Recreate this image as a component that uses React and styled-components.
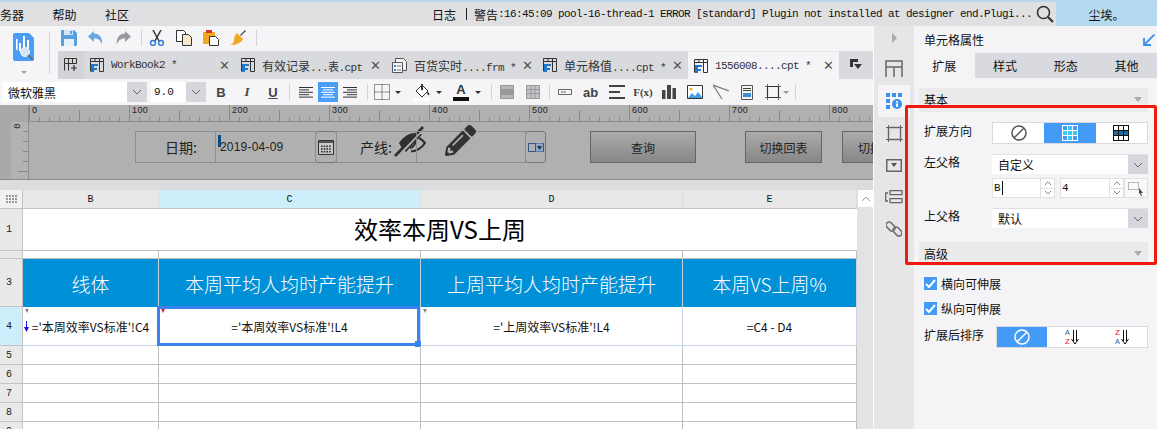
import styled, { createGlobalStyle } from "styled-components";
import { FaPencilAlt } from "react-icons/fa";

const GlobalStyle = createGlobalStyle`
  html, body {
    margin: 0;
    padding: 0;
    background: #f5f5f8;
  }
  * {
    box-sizing: border-box;
  }
`;

const CJK = `"Noto Sans CJK SC", "Liberation Sans", sans-serif`;
const MONO = `"Liberation Mono", "Noto Sans CJK SC", monospace`;

const Page = styled.div`
  width: 1157px;
  height: 429px;
  overflow: hidden;
  font-family: ${CJK};
  font-size: 12px;
  color: #111;
  background: #f5f5f8;
`;

/* top menu */
const MenuBar = styled.div`
  height: 26px;
  border-top: 2px solid #b5d6ee;
  background: #e0e0e3;
  display: flex;
  align-items: center;
`;

const MenuItem = styled.span`
  width: 24px;
  flex: none;
  margin-right: 28.5px;
  white-space: nowrap;
`;

const LogArea = styled.div`
  margin-left: 274.5px;
  width: 600px;
  flex: none;
  display: flex;
  align-items: center;
  white-space: nowrap;
`;

const LogDivider = styled.span`
  width: 1px;
  height: 12px;
  background: #222;
  margin: 0 7px 0 10px;
`;

const LogText = styled.span`
  font-family: ${MONO};
  font-size: 11px;
  letter-spacing: -0.6px;
`;

const SearchSlot = styled.div`
  width: 18px;
  height: 18px;
  flex: none;
  margin-left: 4px;
  display: flex;
`;

const UserBlock = styled.div`
  margin-left: auto;
  width: 101px;
  flex: none;
  height: 24px;
  background: #b5daf0;
  display: flex;
  align-items: center;
  justify-content: center;
`;

const Main = styled.div`
  display: flex;
  height: 403px;
`;

const LeftColumn = styled.div`
  width: 873px;
  flex: none;
  display: flex;
  flex-direction: column;
  overflow: hidden;
`;

/* toolbars */
const TopTools = styled.div`
  height: 53px;
  display: flex;
`;

const LogoColumn = styled.div`
  width: 58px;
  flex: none;
  padding: 7px 0 0 13px;
  position: relative;
`;

const LogoDivider = styled.div`
  position: absolute;
  left: 49px;
  top: 6px;
  width: 1px;
  height: 42px;
  background: #d4d4d8;
`;

const LogoArrow = styled.div`
  width: 0;
  height: 0;
  margin: 7px 0 0 8px;
  border-left: 3px solid transparent;
  border-right: 3px solid transparent;
  border-top: 3px solid #a0a0a4;
`;

const TopStack = styled.div`
  flex: 1;
  min-width: 0;
`;

const QuickRow = styled.div`
  height: 25px;
  padding: 4px 0 0 3px;
  display: flex;
  align-items: flex-start;
  gap: 11px;
`;

const QuickSep = styled.div`
  width: 1px;
  height: 16px;
  background: #d4d4d8;
  margin: 0 -4px 0 -1px;
`;

const TabStrip = styled.div`
  height: 28px;
  background: #d8dade;
  display: flex;
`;

const AddTab = styled.div`
  width: 26px;
  background: #d2d4d8;
  display: flex;
  align-items: center;
  justify-content: center;
`;

const Tab = styled.div`
  width: 151px;
  flex: none;
  display: flex;
  align-items: center;
  padding-left: 6px;
  background: ${(p) => (p.$active ? "#f5f5f8" : "transparent")};
  border-top: ${(p) => (p.$active ? "1px solid #e8e8ea" : "none")};
`;

const TabLabel = styled.span`
  margin-left: 7px;
  width: 107px;
  font-family: ${MONO};
  font-size: 11px;
  letter-spacing: -0.6px;
  color: #333;
  white-space: nowrap;
  overflow: hidden;
`;

const TabCjk = styled.span`
  font-family: ${CJK};
  font-size: 12px;
  letter-spacing: 0;
`;

const TabClose = styled.span`
  margin-left: 1px;
  font-size: 13px;
  color: #555;
  font-family: "Liberation Sans", sans-serif;
`;

const TabMenu = styled.div`
  width: 34px;
  display: flex;
  align-items: center;
  justify-content: center;
`;

const FormatRow = styled.div`
  height: 26px;
  display: flex;
  align-items: center;
  padding-left: 2px;
`;

const Combo = styled.div`
  width: ${(p) => p.$w}px;
  height: 20px;
  margin-left: ${(p) => p.$ml || 0}px;
  display: flex;
  background: #fff;
  align-items: center;
`;

const ComboText = styled.span`
  flex: 1;
  padding-left: ${(p) => p.$pad || 6}px;
  font-size: ${(p) => p.$size || 12}px;
  font-family: ${(p) => (p.$mono ? MONO : CJK)};
  white-space: nowrap;
`;

const ComboArrow = styled.div`
  width: 20px;
  height: 100%;
  background: #d5d7dc;
  display: flex;
  align-items: center;
  justify-content: center;
`;

const Slot = styled.div`
  width: ${(p) => p.$w}px;
  height: 20px;
  margin-left: ${(p) => p.$ml || 0}px;
  flex: none;
  display: flex;
  align-items: center;
  justify-content: center;
  background: ${(p) => (p.$on ? "#4a9cf5" : "transparent")};
  font-family: ${(p) => (p.$serif ? '"Liberation Serif", serif' : '"Liberation Sans", sans-serif')};
  font-weight: ${(p) => (p.$bold ? 700 : 400)};
  font-style: ${(p) => (p.$italic ? "italic" : "normal")};
  text-decoration: ${(p) => (p.$under ? "underline" : "none")};
  font-size: ${(p) => p.$size || 13}px;
  color: #444;
  white-space: nowrap;
`;

const VSep = styled.div`
  width: 1px;
  height: 16px;
  flex: none;
  margin-left: ${(p) => p.$ml}px;
  background: #d4d4d8;
`;

const Caret = styled.div`
  width: 0;
  height: 0;
  flex: none;
  margin-left: ${(p) => p.$ml}px;
  border-left: 3px solid transparent;
  border-right: 3px solid transparent;
  border-top: 3px solid ${(p) => p.$color || "#333"};
`;

const ColorA = styled.div`
  width: 16px;
  margin-left: ${(p) => p.$ml}px;
  flex: none;
  display: flex;
  flex-direction: column;
  align-items: center;
  font-family: "Liberation Sans", sans-serif;
  font-weight: 700;
  font-size: 13px;
  line-height: 13px;
  color: #333;
  &::after {
    content: "";
    width: 16px;
    height: 4px;
    background: #111;
    margin-top: 1px;
  }
`;

/* report form designer */
const Designer = styled.div`
  height: 75px;
  background: #b0b0b0;
  display: flex;
  border-bottom: 1px solid #8c8c8c;
`;

const SideRuler = styled.div`
  width: 29px;
  flex: none;
  padding: 17px 0 0 11px;
  background: #a9a9a9;
  border-right: 1px solid #8e8e8e;
`;

const SideRulerInner = styled.div`
  position: relative;
  height: 57px;
  background: #b2b2b2;
`;

const SideZero = styled.span`
  position: absolute;
  left: 4px;
  top: -1px;
  font-size: 9px;
  font-family: ${MONO};
  transform: rotate(-90deg);
  color: #222;
`;

const SideTick = styled.div`
  height: 10px;
  width: ${(p) => p.$w}px;
  margin-left: auto;
  border-bottom: 1px solid #8a8a8a;
`;

const DesignerBody = styled.div`
  flex: 1;
  min-width: 0;
  overflow: hidden;
`;

const Ruler = styled.div`
  height: 17px;
  display: flex;
  border-bottom: 1px solid #8e8e8e;
`;

const RulerMark = styled.div`
  width: 100px;
  flex: none;
  padding-left: 2px;
  font-size: 9px;
  line-height: 11px;
  font-family: "Liberation Sans", sans-serif;
  letter-spacing: 0.4px;
  color: #222;
  border-left: 1px solid #8a8a8a;
  background-image: repeating-linear-gradient(to right, transparent 0, transparent 9px, #8a8a8a 9px, #8a8a8a 10px),
    linear-gradient(to right, transparent 49px, #8a8a8a 49px, #8a8a8a 50px, transparent 50px);
  background-size: 100% 4px, 100% 11px;
  background-position: 0 100%, 0 100%;
  background-repeat: no-repeat;
`;

const WidgetRow = styled.div`
  display: flex;
  align-items: stretch;
  height: 32px;
  margin-top: 9px;
  padding-left: 107px;
`;

const LabelBox = styled.div`
  position: relative;
  width: ${(p) => p.$w}px;
  flex: none;
  border: 1px solid #8e8e8e;
  margin-left: -1px;
  display: flex;
  align-items: center;
  padding-left: ${(p) => p.$pad}px;
  font-size: ${(p) => p.$size || 14}px;
  color: #222;
  white-space: nowrap;
`;

const ValueText = styled.span`
  font-family: "Liberation Sans", sans-serif;
  font-size: 12px;
  letter-spacing: 0.2px;
  color: #222;
`;

const CursorMark = styled.div`
  position: absolute;
  left: 2px;
  top: 3px;
  width: 3px;
  height: 12px;
  background: #0d4c80;
`;

const Overlay = styled.div`
  position: absolute;
  left: ${(p) => p.$x}px;
  top: ${(p) => p.$y}px;
  display: flex;
  color: #333;
`;

const PickButton = styled.div`
  width: ${(p) => p.$w}px;
  flex: none;
  margin-left: -1px;
  border: 1px solid #777;
  border-radius: 3px;
  display: flex;
  align-items: center;
  justify-content: center;
`;

const GreyButton = styled.div`
  width: ${(p) => p.$w}px;
  flex: none;
  margin-left: ${(p) => p.$ml}px;
  border: 1px solid #666;
  background: linear-gradient(#ababab, #878787);
  display: flex;
  align-items: center;
  justify-content: ${(p) => (p.$clip ? "flex-start" : "center")};
  padding-left: ${(p) => (p.$clip ? 15 : 0)}px;
  white-space: nowrap;
  color: #222;
  font-size: 12px;
`;

const Strip = styled.div`
  height: 10px;
  background: #dcdcdf;
`;

/* spreadsheet */
const SheetArea = styled.div`
  flex: 1;
  display: flex;
  background: #fff;
  min-height: 0;
`;

const Sheet = styled.div`
  width: 857px;
  display: grid;
  grid-template-columns: 23px 136px 262px 262px 174px;
  grid-template-rows: 19px 42px 8px 48px 39px 19px 19px 19px 19px 19px;
  background: #fff;
`;

const Corner = styled.div`
  background: #f1f1f4;
  border-right: 1px solid #c4c4c4;
  border-bottom: 1px solid #c4c4c4;
  display: flex;
  align-items: center;
  justify-content: center;
`;

const ColHead = styled.div`
  background: ${(p) => (p.$on ? "#cdeefb" : "#e8e8e8")};
  border-bottom: 1px solid #c4c4c4;
  border-right: 1px solid #dcdcdc;
  display: flex;
  align-items: center;
  justify-content: center;
  font-family: ${MONO};
  font-size: 10px;
`;

const RowHead = styled.div`
  background: ${(p) => (p.$on ? "#cdeefb" : "#e9e9e9")};
  border-right: 1px solid #c4c4c4;
  border-bottom: 1px solid #c4c4c4;
  display: flex;
  align-items: center;
  justify-content: center;
  padding-right: 4px;
  font-family: ${MONO};
  font-size: 10px;
  color: #222;
`;

const TitleCell = styled.div`
  grid-column: 2 / 6;
  border-bottom: 1px solid #c0c0c0;
  display: flex;
  align-items: center;
  justify-content: center;
  padding-bottom: 2px;
  font-size: 24px;
  color: #000;
`;

const Cell = styled.div`
  position: relative;
  border-right: 1px solid ${(p) => (p.$soft ? "#c8d6e6" : "#c0c0c0")};
  border-bottom: 1px solid ${(p) => (p.$soft ? "#c8d6e6" : "#c0c0c0")};
  display: flex;
  align-items: center;
  justify-content: center;
  white-space: nowrap;
  color: #111;
`;

const HeadCell = styled.div`
  background: #0090d7;
  border-right: 1px solid #c4d4dc;
  display: flex;
  align-items: center;
  justify-content: center;
  color: #fff;
  font-size: 19px;
  font-weight: 300;
  white-space: nowrap;
`;

const ExpandMark = styled.span`
  position: absolute;
  left: 2px;
  top: 2px;
  width: 0;
  height: 0;
  border-left: 2px solid transparent;
  border-right: 2px solid transparent;
  border-top: 4px solid ${(p) => p.$color || "#888"};
`;

const BlueArrow = styled.span`
  position: absolute;
  left: 1px;
  top: 14px;
  display: flex;
`;

const Selection = styled.div`
  position: absolute;
  inset: -1px 0 -1px -2px;
  border: 3px solid #3a82ee;
  pointer-events: none;
  &::after {
    content: "";
    position: absolute;
    right: -4px;
    bottom: -4px;
    width: 6px;
    height: 6px;
    background: #3a82ee;
  }
`;

const ScrollBar = styled.div`
  width: 16px;
  background: #e3e3e3;
`;

const ScrollUp = styled.div`
  height: 17px;
  margin-left: 1px;
  background: #fff;
  display: flex;
  align-items: center;
  justify-content: center;
`;

/* right side */
const Rail = styled.div`
  width: 41px;
  flex: none;
  background: #e6e6e6;
  border-left: 1px solid #fbfbfb;
  display: flex;
  flex-direction: column;
  align-items: center;
  padding-top: 7px;
`;

const RailArrow = styled.div`
  width: 0;
  height: 0;
  margin-bottom: 10px;
  border-top: 5px solid transparent;
  border-bottom: 5px solid transparent;
  border-left: 5px solid #aaa;
`;

const RailItem = styled.div`
  width: 32px;
  height: 32px;
  display: flex;
  align-items: center;
  justify-content: center;
  background: ${(p) => (p.$on ? "#f5f5f8" : "transparent")};
`;

const Panel = styled.div`
  flex: 1;
  position: relative;
  background: #f4f4f7;
`;

const PanelTitle = styled.div`
  height: 27px;
  padding: 0 2px 0 10px;
  display: flex;
  align-items: center;
  justify-content: space-between;
`;

const PanelTabs = styled.div`
  height: 25px;
  display: flex;
`;

const PanelTab = styled.div`
  flex: 1;
  display: flex;
  align-items: center;
  justify-content: center;
  background: ${(p) => (p.$on ? "#f4f4f7" : "#d8dadf")};
`;

const SectionHead = styled.div`
  height: 24px;
  margin: ${(p) => p.$mt}px 9px 0 5px;
  padding: 3px 6px 0 5px;
  background: #ebebeb;
  display: flex;
  justify-content: space-between;
  align-items: flex-start;
  line-height: 18px;
  font-size: 12px;
`;

const SectionCaret = styled.div`
  width: 0;
  height: 0;
  margin-top: 6px;
  border-left: 4px solid transparent;
  border-right: 4px solid transparent;
  border-top: 5px solid #aaa;
`;

const Field = styled.div`
  display: flex;
  align-items: center;
  margin: ${(p) => p.$mt}px 9px 0 10px;
  height: ${(p) => p.$h}px;
`;

const FieldLabel = styled.div`
  width: ${(p) => p.$w || 68}px;
  flex: none;
  padding-bottom: 6px;
  white-space: nowrap;
`;

const Segments = styled.div`
  flex: 1;
  height: 100%;
  display: flex;
  background: #fff;
  border: 1px solid #d8dadf;
`;

const Segment = styled.div`
  flex: 1;
  display: flex;
  align-items: center;
  justify-content: center;
  background: ${(p) => (p.$on ? "#439bf7" : "#fff")};
`;

const PanelSelect = styled.div`
  flex: 1;
  height: 100%;
  display: flex;
  align-items: center;
  background: #fff;
  border-top: 1px solid #e2e2e6;
`;

const SpinField = styled.div`
  display: flex;
  width: ${(p) => p.$w}px;
  height: 100%;
  margin-left: ${(p) => p.$ml || 0}px;
  background: #fff;
  border: 1px solid #e0e0e4;
  align-items: center;
  flex: none;
`;

const SpinText = styled.span`
  flex: 1;
  padding-left: 1px;
  font-family: ${MONO};
  font-size: 11px;
  display: flex;
  align-items: center;
`;

const TextCaret = styled.i`
  width: 1px;
  height: 14px;
  background: #111;
  margin-left: 1px;
`;

const SpinButtons = styled.div`
  width: 14px;
  height: 100%;
  display: flex;
  flex-direction: column;
  border-left: 1px solid #e0e0e4;
`;

const SpinButton = styled.div`
  flex: 1;
  display: flex;
  align-items: center;
  justify-content: center;
  &:first-child {
    border-bottom: 1px solid #e0e0e4;
  }
`;

const RegionPick = styled.div`
  width: 24px;
  height: 100%;
  flex: none;
  display: flex;
  align-items: center;
  justify-content: center;
  background: #f9f9fa;
  border: 1px solid #e0e0e4;
`;

const CheckRow = styled.div`
  display: flex;
  align-items: center;
  gap: 4px;
  height: 13px;
  margin: ${(p) => p.$mt}px 0 0 10px;
  white-space: nowrap;
`;

const CheckBox = styled.div`
  width: 13px;
  height: 13px;
  background: #439bf7;
  display: flex;
  align-items: center;
  justify-content: center;
`;

const SortGlyph = styled.div`
  display: flex;
  align-items: center;
  gap: 1px;
`;

const SortLetters = styled.div`
  display: flex;
  flex-direction: column;
  font-family: ${MONO};
  font-size: 8px;
  line-height: 9px;
`;

const SortLetter = styled.span`
  display: block;
  height: 9px;
  color: ${(p) => p.$color};
`;

const RedFrame = styled.div`
  position: absolute;
  left: -9px;
  right: 0;
  top: 79px;
  height: 160px;
  border: 3px solid #f01a10;
  border-radius: 2px;
  pointer-events: none;
`;

/* small drawings */
const Chevron = ({ dir = "down", color = "#666", w = 10 }) => (
  <svg width={w} height={w * 0.6} viewBox="0 0 10 6" fill="none">
    <path d={dir === "down" ? "M1 1l4 4 4-4" : "M1 5l4-4 4 4"} stroke={color} strokeWidth="1" />
  </svg>
);

const SearchIcon = () => (
  <svg width="18" height="18" viewBox="0 0 18 18" fill="none" stroke="#333">
    <circle cx="7.5" cy="7.5" r="6" strokeWidth="1.6" />
    <path d="M12 12l5 5" strokeWidth="2.2" />
  </svg>
);

const LogoIcon = () => (
  <svg width="21" height="28" viewBox="0 0 21 28">
    <path d="M2 0h14l5 5v21a2 2 0 0 1-2 2H2a2 2 0 0 1-2-2V2a2 2 0 0 1 2-2z" fill="#4a9cf5" />
    <path d="M3 6h1.5v11H3zM6 10h2v8H6zM10 3h2v12h-2zM14 7h2v9h-2z" fill="#fff" />
    <circle cx="12" cy="19" r="4.5" fill="#d8e6f4" stroke="#f4f4f4" />
    <path d="M15 22l5 5" stroke="#666" strokeWidth="1.5" />
  </svg>
);

const SaveIcon = () => (
  <svg width="16" height="16" viewBox="0 0 16 16">
    <path d="M1 0h12l3 3v12a1 1 0 0 1-1 1H1a1 1 0 0 1-1-1V1a1 1 0 0 1 1-1z" fill="#5a9fe0" />
    <path d="M3 0h9v5H3z" fill="#d4e6f8" />
    <path d="M9 1h2v3H9z" fill="#5a9fe0" />
    <path d="M3 9h10v7H3z" fill="#e6f0fa" />
  </svg>
);

const UndoIcon = ({ color, flip }) => (
  <svg width="16" height="16" viewBox="0 0 16 16" style={flip ? { transform: "scaleX(-1)" } : undefined}>
    <path d="M6 1L0 6.5 6 12V8.5c4 0 6.5 1.5 8 6 1-6-2-10.5-8-11z" fill={color} />
  </svg>
);

const ScissorsIcon = () => (
  <svg width="16" height="16" viewBox="0 0 16 16" fill="none">
    <path d="M4 0l6 11M12 0L6 11" stroke="#333" strokeWidth="1.5" />
    <circle cx="4" cy="13" r="2.4" stroke="#2f7fd6" strokeWidth="1.5" />
    <circle cx="12" cy="13" r="2.4" stroke="#2f7fd6" strokeWidth="1.5" />
  </svg>
);

const CopyIcon = () => (
  <svg width="16" height="16" viewBox="0 0 16 16">
    <path d="M.5.5h7l2 2v9h-9z" fill="#fff" stroke="#333" />
    <path d="M6.5 4.5h6l3 3v8h-9z" fill="#f5e8c8" stroke="#333" />
  </svg>
);

const PasteIcon = () => (
  <svg width="16" height="16" viewBox="0 0 16 16">
    <path d="M0 2h12v12H0z" fill="#f0a820" />
    <path d="M3 0h6v3H3z" fill="#d83030" />
    <path d="M6.5 6.5h6l3 3v6h-9z" fill="#fff" stroke="#333" />
  </svg>
);

const BrushIcon = () => (
  <svg width="16" height="16" viewBox="0 0 16 16">
    <path d="M10 5l5-5 1 1-5 5z" fill="#555" />
    <path d="M7 3l6 6c-2 4-7 6-13 6 3-1 4-3 4-5 0-3 1-5 3-7z" fill="#f0a820" />
  </svg>
);

const AddGridIcon = () => (
  <svg width="14" height="14" viewBox="0 0 14 14" fill="none" stroke="#333">
    <path d="M.5.5h12v5H.5zM.5 5.5v7M4.5.5v12M8.5.5v5" />
    <path d="M7 10h6M10 7v6" strokeWidth="1.2" />
  </svg>
);

const TabGridIcon = () => (
  <svg width="14" height="14" viewBox="0 0 14 14" fill="none">
    <path d="M.5.5h13v3H.5zM.5 3.5v10M13.5 3.5v10h-4M9.5 .5v13M5 .5v3" stroke="#333" />
    <path d="M1 6h7v2H4v2h3v2H4v2H1z" fill="#1f78c8" />
  </svg>
);

const FormTabIcon = () => (
  <svg width="15" height="15" viewBox="0 0 15 15" fill="none">
    <path d="M3.5.5h8l3 3v9h-11z" fill="#f2f2f2" stroke="#555" />
    <path d="M.5 4.5h10v10H.5z" fill="#f5f5f8" stroke="#555" />
    <path d="M2 7h2v2H2zM2 11h2v2H2z" fill="#3a85d8" />
    <path d="M5 8h4M5 12h4" stroke="#777" />
  </svg>
);

const TabMenuIcon = () => (
  <svg width="12" height="12" viewBox="0 0 12 12">
    <path d="M0 0h8v3H3v5H0z" fill="#333" />
    <path d="M4 5h8L8 10z" fill="#333" />
  </svg>
);

const AlignIcon = ({ kind, color = "#333" }) => {
  const rows = [14, 10, 14, 10, 14];
  return (
    <svg width="14" height="11" viewBox="0 0 14 11">
      {rows.map((w, i) => {
        const x = kind === "left" ? 0 : kind === "right" ? 14 - w : (14 - w) / 2;
        return <rect key={i} x={x} y={i * 2.4} width={w} height="1" fill={color} />;
      })}
    </svg>
  );
};

const BorderIcon = () => (
  <svg width="16" height="16" viewBox="0 0 16 16" fill="none" stroke="#333" strokeDasharray="1 1">
    <path d="M.5.5h15v15H.5zM.5 8h15M8 .5v15" />
  </svg>
);

const FillIcon = () => (
  <svg width="18" height="18" viewBox="0 0 18 18">
    <path d="M8 2l6 6-6 6-6-6z" fill="#fff" stroke="#333" />
    <path d="M13 8c2 2 3 3 2 4s-2-1-2-4zM7 1h2v6H7z" fill="#333" />
    <path d="M0 15h16v3H0z" fill="#fff" />
  </svg>
);

const MergeIcon = ({ split }) => (
  <svg width="14" height="14" viewBox="0 0 14 14">
    <path d="M0 0h14v14H0z" fill="#999" />
    <path d={split ? "M1 1h3.5v3H1zM5.5 1h3v3h-3zM9.5 1H13v3H9.5zM1 5h3.5v3H1zM5.5 5h3v3h-3zM9.5 5H13v3H9.5zM1 9h3.5v4H1zM5.5 9h3v4h-3zM9.5 9H13v4H9.5z" : "M1 1h12v3H1zM1 10h12v3H1z"} fill={split ? "#c4c4c8" : "#b8b8bc"} />
  </svg>
);

const FieldIcon = () => (
  <svg width="14" height="6" viewBox="0 0 14 6" fill="none" stroke="#666">
    <path d="M.5.5h13v5H.5z" />
    <path d="M3 3h5" />
  </svg>
);

const LinesIcon = () => (
  <svg width="16" height="14" viewBox="0 0 16 14" fill="#444">
    <path d="M0 0h16v2H0zM0 6h11v2H0zM0 12h16v2H0z" />
  </svg>
);

const ChartIcon = () => (
  <svg width="14" height="14" viewBox="0 0 14 14" fill="#444">
    <path d="M0 5h3.5v9H0zM5 0h4v14H5zM10.5 3H14v11h-3.5z" />
  </svg>
);

const ImageIcon = () => (
  <svg width="16" height="14" viewBox="0 0 16 14">
    <path d="M.5.5h15v13H.5z" fill="#fff" stroke="#333" />
    <circle cx="4" cy="4" r="1.5" fill="#f0b020" />
    <path d="M1 13l4-5 3 3 3-4 4 5v1z" fill="#3fa0e8" />
  </svg>
);

const SlashIcon = () => (
  <svg width="16" height="16" viewBox="0 0 16 16" fill="none" stroke="#777" strokeWidth="1.2">
    <path d="M0 1l16 6M0 1l9 14" />
  </svg>
);

const DocIcon = () => (
  <svg width="12" height="15" viewBox="0 0 12 15">
    <path d="M.5.5h11v14H.5z" fill="#f4f4f4" stroke="#555" />
    <path d="M2 3h8v1H2zM2 5h8v1H2z" fill="#444" />
    <path d="M2 8h8v4H2z" fill="#3a90d8" />
  </svg>
);

const BoxIcon = () => (
  <svg width="16" height="16" viewBox="0 0 16 16" fill="none" stroke="#333">
    <path d="M2.5 2.5h11v11h-11z" strokeWidth="1.2" />
    <path d="M0 2.5h2.5M13.5 2.5H16M0 13.5h2.5M13.5 13.5H16M2.5 0v2.5M13.5 0v2.5M2.5 13.5V16M13.5 13.5V16" stroke="#666" />
  </svg>
);

const CalendarIcon = () => (
  <svg width="16" height="16" viewBox="0 0 16 16">
    <path d="M.5 1.5h15v14H.5z" fill="#c8c8c8" stroke="#333" />
    <path d="M1 2h14v2H1z" fill="#555" />
    {[0, 1, 2].map((r) =>
      [0, 1, 2, 3].map((c) => <rect key={`${r}${c}`} x={3 + c * 2.7} y={6.5 + r * 2.7} width="1.6" height="1.6" fill="#333" />)
    )}
  </svg>
);

const EyeSlashIcon = () => (
  <svg width="32" height="32" viewBox="0 0 32 32" fill="none">
    <path d="M5 17C9 11 15 7 21 7c3 0 5 .5 7 1.5L12 26c-3-2-5-5-7-9z" fill="#2e2e2e" />
    <path d="M25 12c2.5 1.3 4.5 3 6 5-3 4.5-8 8-14 8.5" stroke="#2e2e2e" strokeWidth="2.2" />
    <path d="M21 14c1 3-1 7-5 8" stroke="#2e2e2e" strokeWidth="2" />
    <path d="M2 31L30 1" stroke="#b0b0b0" strokeWidth="4.5" />
    <path d="M1 30L29 1" stroke="#2e2e2e" strokeWidth="2.6" />
  </svg>
);

const DropPickIcon = () => (
  <svg width="16" height="9" viewBox="0 0 16 9">
    <path d="M.5.5h15v8H.5z" fill="none" stroke="#33558a" />
    <path d="M7.5 0h8v9h-8z" fill="#8fa6c4" stroke="#33558a" />
    <path d="M9 3h5L11.5 7z" fill="#17305a" />
  </svg>
);

const DotsIcon = () => (
  <svg width="11" height="8" viewBox="0 0 11 8" fill="#999">
    {[0, 3, 6].map((y) => [0, 3, 6, 9].map((x) => <rect key={`${x}${y}`} x={x} y={y} width="2" height="2" />))}
  </svg>
);

const DownFlowIcon = () => (
  <svg width="5" height="11" viewBox="0 0 5 11">
    <path d="M2 0h1v6h2L2.5 11 0 6h2z" fill="#1414e8" />
  </svg>
);

const RailLayoutIcon = () => (
  <svg width="18" height="18" viewBox="0 0 18 18" fill="none" stroke="#666" strokeWidth="1.5">
    <path d="M1 1h16v6H1zM1 7v10M9 7v10M17 7v10" />
  </svg>
);

const RailCellIcon = () => (
  <svg width="16" height="16" viewBox="0 0 16 16">
    <path d="M0 0h4v4H0zM6 0h4v4H6zM12 0h4v4h-4zM0 6h4v4H0zM0 12h4v4H0z" fill="#3a90f0" />
    <circle cx="11" cy="11" r="5" fill="#3a90f0" />
    <path d="M10 8h2v1.5h-2zM10 10.5h2V14h-2z" fill="#fff" />
  </svg>
);

const RailBoxIcon = () => (
  <svg width="17" height="17" viewBox="0 0 17 17" fill="none" stroke="#666">
    <path d="M2.5 2.5h12v12h-12z" strokeWidth="1.4" />
    <path d="M0 2.5h2M15 2.5h2M0 14.5h2M15 14.5h2M2.5 0v2M14.5 0v2M2.5 15v2M14.5 15v2" />
  </svg>
);

const RailDropIcon = () => (
  <svg width="16" height="13" viewBox="0 0 16 13">
    <path d="M.75.75h14.5v11.5H.75z" fill="none" stroke="#666" strokeWidth="1.5" />
    <path d="M5 4h6L8 8z" fill="#555" />
  </svg>
);

const RailWidgetIcon = () => (
  <svg width="18" height="14" viewBox="0 0 18 14" fill="none" stroke="#666" strokeWidth="1.3">
    <path d="M5 .7h12v4H5zM5 8.7h12v4H5zM3 3H.7v8H3" />
  </svg>
);

const RailLinkIcon = () => (
  <svg width="16" height="16" viewBox="0 0 16 16" fill="none" stroke="#777" strokeWidth="1.7">
    <rect x="-.5" y="2.5" width="10" height="6" rx="3" transform="rotate(45 4.5 5.5)" />
    <rect x="6.5" y="7.5" width="10" height="6" rx="3" transform="rotate(45 11.5 10.5)" />
  </svg>
);

const CornerArrowIcon = () => (
  <svg width="12" height="12" viewBox="0 0 12 12" fill="none" stroke="#3a90f0" strokeWidth="1.8">
    <path d="M11.5.5L1.5 10.5M1 4v7h7" />
  </svg>
);

const BanIcon = ({ color = "#555" }) => (
  <svg width="16" height="16" viewBox="0 0 16 16" fill="none" stroke={color} strokeWidth="1.5">
    <circle cx="8" cy="8" r="7" />
    <path d="M3.2 12.8l9.6-9.6" />
  </svg>
);

const GridGlyph = ({ on }) => (
  <svg width="16" height="16" viewBox="0 0 16 16">
    <path d="M0 0h16v16H0z" fill={on ? "#fff" : "#111"} />
    {[0, 1, 2].map((r) =>
      [0, 1, 2].map((c) => {
        const fill = on ? (c === 1 || r === 1 ? "#3cc8f4" : "#439bf7") : r === 1 ? "#1f6aa0" : "#fff";
        return <rect key={`${r}${c}`} x={1 + c * 5} y={1 + r * 5} width="4" height="4" fill={fill} />;
      })
    )}
  </svg>
);

const RegionIcon = () => (
  <svg width="16" height="15" viewBox="0 0 16 15">
    <path d="M.5 1.5h10v7H.5z" fill="none" stroke="#777" strokeDasharray="1 1" />
    <path d="M11 7l4 5h-2l1 3-1 0-1-3-1 1z" fill="#444" />
  </svg>
);

const CheckMark = () => (
  <svg width="11" height="10" viewBox="0 0 11 10" fill="none" stroke="#fff" strokeWidth="2">
    <path d="M1 5l3 3 6-7" />
  </svg>
);

const DoubleDownIcon = () => (
  <svg width="8" height="15" viewBox="0 0 8 15" fill="none" stroke="#111">
    <path d="M2.500 0v11M5.500 0v11M.5 9L4 14l3.500-5" />
  </svg>
);

const TABS = [
  { id: "wb", name: "WorkBook2 *", icon: <TabGridIcon /> },
  { id: "yx", cjk: "有效记录", name: "...表.cpt", icon: <TabGridIcon /> },
  { id: "bh", cjk: "百货实时", name: "....frm *", icon: <FormTabIcon /> },
  { id: "dy", cjk: "单元格值", name: "....cpt *", icon: <TabGridIcon /> },
  { id: "cur", name: "1556008....cpt *", icon: <TabGridIcon />, active: true },
];

const RULER = [0, 100, 200, 300, 400, 500, 600, 700, 800];
const PANEL_TABS = ["扩展", "样式", "形态", "其他"];
const EMPTY_ROWS = [5, 6, 7, 8, 9];

function Spinner() {
  return (
    <SpinButtons>
      <SpinButton>
        <Chevron dir="up" w={8} />
      </SpinButton>
      <SpinButton>
        <Chevron w={8} />
      </SpinButton>
    </SpinButtons>
  );
}

function SortIcon({ first, second }) {
  return (
    <SortGlyph>
      <SortLetters>
        <SortLetter $color={first === "A" ? "#2f6fa8" : "#e81010"}>{first}</SortLetter>
        <SortLetter $color={second === "A" ? "#2f6fa8" : "#e81010"}>{second}</SortLetter>
      </SortLetters>
      <DoubleDownIcon />
    </SortGlyph>
  );
}

export default function App() {
  return (
    <Page>
      <GlobalStyle />
      <MenuBar>
        <MenuItem>务器</MenuItem>
        <MenuItem>帮助</MenuItem>
        <MenuItem>社区</MenuItem>
        <LogArea>
          日志
          <LogDivider />
          警告
          <LogText>:16:45:09 pool-16-thread-1 ERROR [standard] Plugin not installed at designer end.Plugi...</LogText>
        </LogArea>
        <SearchSlot>
          <SearchIcon />
        </SearchSlot>
        <UserBlock>尘埃。</UserBlock>
      </MenuBar>
      <Main>
        <LeftColumn>
          <TopTools>
            <LogoColumn>
              <LogoIcon />
              <LogoArrow />
              <LogoDivider />
            </LogoColumn>
            <TopStack>
              <QuickRow>
                <SaveIcon />
                <UndoIcon color="#6aa8e4" />
                <UndoIcon color="#9a9a9e" flip />
                <QuickSep />
                <ScissorsIcon />
                <CopyIcon />
                <PasteIcon />
                <BrushIcon />
                <QuickSep />
              </QuickRow>
              <TabStrip>
                <AddTab>
                  <AddGridIcon />
                </AddTab>
                {TABS.map((tab) => (
                  <Tab key={tab.id} $active={tab.active}>
                    {tab.icon}
                    <TabLabel>
                      {tab.cjk && <TabCjk>{tab.cjk}</TabCjk>}
                      {tab.name}
                    </TabLabel>
                    <TabClose>✕</TabClose>
                  </Tab>
                ))}
                <TabMenu>
                  <TabMenuIcon />
                </TabMenu>
              </TabStrip>
            </TopStack>
          </TopTools>
          <FormatRow>
            <Combo $w={145}>
              <ComboText>微软雅黑</ComboText>
              <ComboArrow>
                <Chevron />
              </ComboArrow>
            </Combo>
            <Combo $w={55} $ml={4}>
              <ComboText $mono $size={11} $pad={3}>9.0</ComboText>
              <ComboArrow>
                <Chevron />
              </ComboArrow>
            </Combo>
            <Slot $w={26} $ml={2} $bold>B</Slot>
            <Slot $w={26} $italic $bold $serif>I</Slot>
            <Slot $w={26} $under $bold>U</Slot>
            <VSep $ml={3} />
            <Slot $w={20} $ml={6}>
              <AlignIcon kind="left" />
            </Slot>
            <Slot $w={20} $ml={2} $on>
              <AlignIcon kind="center" color="#fff" />
            </Slot>
            <Slot $w={20} $ml={2}>
              <AlignIcon kind="right" />
            </Slot>
            <VSep $ml={7} />
            <Slot $w={16} $ml={6}>
              <BorderIcon />
            </Slot>
            <Caret $ml={5} />
            <Slot $w={18} $ml={13}>
              <FillIcon />
            </Slot>
            <Caret $ml={4} />
            <ColorA $ml={11}>A</ColorA>
            <Caret $ml={6} />
            <VSep $ml={10} />
            <Slot $w={14} $ml={8}>
              <MergeIcon />
            </Slot>
            <Slot $w={14} $ml={12}>
              <MergeIcon split />
            </Slot>
            <VSep $ml={9} />
            <Slot $w={14} $ml={8}>
              <FieldIcon />
            </Slot>
            <Slot $w={13} $ml={12} $bold>ab</Slot>
            <Slot $w={16} $ml={12}>
              <LinesIcon />
            </Slot>
            <Slot $w={16} $ml={10} $serif $bold $size={11}>F(x)</Slot>
            <Slot $w={14} $ml={11}>
              <ChartIcon />
            </Slot>
            <Slot $w={16} $ml={11}>
              <ImageIcon />
            </Slot>
            <Slot $w={16} $ml={10}>
              <SlashIcon />
            </Slot>
            <Slot $w={12} $ml={12}>
              <DocIcon />
            </Slot>
            <Slot $w={16} $ml={12}>
              <BoxIcon />
            </Slot>
            <Caret $ml={2} $color="#999" />
            <VSep $ml={6} />
          </FormatRow>
          <Designer>
            <SideRuler>
              <SideRulerInner>
                <SideZero>0</SideZero>
                <SideTick $w={5} />
                <SideTick $w={5} />
                <SideTick $w={5} />
                <SideTick $w={5} />
                <SideTick $w={10} />
              </SideRulerInner>
            </SideRuler>
            <DesignerBody>
              <Ruler>
                {RULER.map((mark) => (
                  <RulerMark key={mark}>{mark}</RulerMark>
                ))}
              </Ruler>
              <WidgetRow>
                <LabelBox $w={81} $pad={29}>日期:</LabelBox>
                <LabelBox $w={101} $pad={4}>
                  <CursorMark />
                  <ValueText>2019-04-09</ValueText>
                </LabelBox>
                <PickButton $w={22}>
                  <CalendarIcon />
                </PickButton>
                <LabelBox $w={81} $pad={23}>
                  产线:
                  <Overlay $x={57} $y={-6}>
                    <EyeSlashIcon />
                  </Overlay>
                </LabelBox>
                <LabelBox $w={110} $pad={0}>
                  <Overlay $x={28} $y={-7}>
                    <FaPencilAlt size={31} />
                  </Overlay>
                </LabelBox>
                <PickButton $w={21}>
                  <DropPickIcon />
                </PickButton>
                <GreyButton $w={106} $ml={44}>查询</GreyButton>
                <GreyButton $w={77} $ml={49}>切换回表</GreyButton>
                <GreyButton $w={60} $ml={20} $clip>切换回表</GreyButton>
              </WidgetRow>
            </DesignerBody>
          </Designer>
          <Strip />
          <SheetArea>
            <Sheet>
              <Corner>
                <DotsIcon />
              </Corner>
              <ColHead>B</ColHead>
              <ColHead $on>C</ColHead>
              <ColHead>D</ColHead>
              <ColHead>E</ColHead>

              <RowHead>1</RowHead>
              <TitleCell>效率本周VS上周</TitleCell>

              <RowHead />
              <Cell />
              <Cell />
              <Cell />
              <Cell />

              <RowHead>3</RowHead>
              <HeadCell>线体</HeadCell>
              <HeadCell>本周平均人均时产能提升</HeadCell>
              <HeadCell>上周平均人均时产能提升</HeadCell>
              <HeadCell>本周VS上周%</HeadCell>

              <RowHead $on>4</RowHead>
              <Cell $soft>
                <ExpandMark />
                <BlueArrow>
                  <DownFlowIcon />
                </BlueArrow>
                ='本周效率VS标准'!C4
              </Cell>
              <Cell $soft>
                <Selection />
                <ExpandMark $color="#e8203c" />
                ='本周效率VS标准'!L4
              </Cell>
              <Cell $soft>
                <ExpandMark />
                ='上周效率VS标准'!L4
              </Cell>
              <Cell $soft>=C4 - D4</Cell>

              {EMPTY_ROWS.map((row) => [
                <RowHead key={row}>{row}</RowHead>,
                <Cell key={`${row}b`} />,
                <Cell key={`${row}c`} />,
                <Cell key={`${row}d`} />,
                <Cell key={`${row}e`} />,
              ])}
            </Sheet>
            <ScrollBar>
              <ScrollUp>
                <Chevron dir="up" color="#999" />
              </ScrollUp>
            </ScrollBar>
          </SheetArea>
        </LeftColumn>
        <Rail>
          <RailArrow />
          <RailItem>
            <RailLayoutIcon />
          </RailItem>
          <RailItem $on>
            <RailCellIcon />
          </RailItem>
          <RailItem>
            <RailBoxIcon />
          </RailItem>
          <RailItem>
            <RailDropIcon />
          </RailItem>
          <RailItem>
            <RailWidgetIcon />
          </RailItem>
          <RailItem>
            <RailLinkIcon />
          </RailItem>
        </Rail>
        <Panel>
          <PanelTitle>
            单元格属性
            <CornerArrowIcon />
          </PanelTitle>
          <PanelTabs>
            {PANEL_TABS.map((tab, i) => (
              <PanelTab key={tab} $on={i === 0}>
                {tab}
              </PanelTab>
            ))}
          </PanelTabs>
          <SectionHead $mt={10}>
            基本
            <SectionCaret />
          </SectionHead>
          <Field $mt={10} $h={22}>
            <FieldLabel>扩展方向</FieldLabel>
            <Segments>
              <Segment>
                <BanIcon />
              </Segment>
              <Segment $on>
                <GridGlyph on />
              </Segment>
              <Segment>
                <GridGlyph />
              </Segment>
            </Segments>
          </Field>
          <Field $mt={10} $h={20}>
            <FieldLabel>左父格</FieldLabel>
            <PanelSelect>
              <ComboText>自定义</ComboText>
              <ComboArrow>
                <Chevron />
              </ComboArrow>
            </PanelSelect>
          </Field>
          <Field $mt={4} $h={20}>
            <FieldLabel />
            <SpinField $w={63}>
              <SpinText>
                B
                <TextCaret />
              </SpinText>
              <Spinner />
            </SpinField>
            <SpinField $w={64} $ml={5}>
              <SpinText>4</SpinText>
              <Spinner />
            </SpinField>
            <RegionPick>
              <RegionIcon />
            </RegionPick>
          </Field>
          <Field $mt={10} $h={20}>
            <FieldLabel>上父格</FieldLabel>
            <PanelSelect>
              <ComboText>默认</ComboText>
              <ComboArrow>
                <Chevron />
              </ComboArrow>
            </PanelSelect>
          </Field>
          <SectionHead $mt={14}>
            高级
            <SectionCaret />
          </SectionHead>
          <CheckRow $mt={11}>
            <CheckBox>
              <CheckMark />
            </CheckBox>
            横向可伸展
          </CheckRow>
          <CheckRow $mt={12}>
            <CheckBox>
              <CheckMark />
            </CheckBox>
            纵向可伸展
          </CheckRow>
          <Field $mt={11} $h={22}>
            <FieldLabel $w={72}>扩展后排序</FieldLabel>
            <Segments>
              <Segment $on>
                <BanIcon color="#fff" />
              </Segment>
              <Segment>
                <SortIcon first="A" second="Z" />
              </Segment>
              <Segment>
                <SortIcon first="Z" second="A" />
              </Segment>
            </Segments>
          </Field>
          <RedFrame />
        </Panel>
      </Main>
    </Page>
  );
}
